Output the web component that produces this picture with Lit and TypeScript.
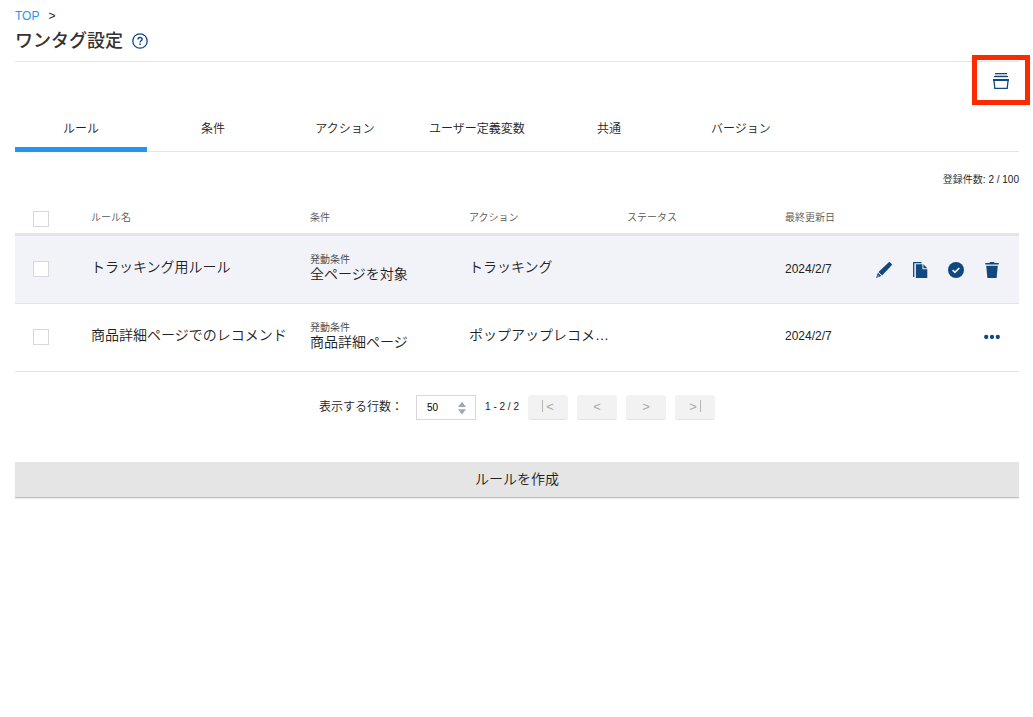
import { LitElement, html, css, svg, nothing } from "lit";
import { customElement, property, state } from "lit/decorators.js";
import { classMap } from "lit/directives/class-map.js";

const icons: Record<string, unknown> = {
  help: svg`<circle cx="8" cy="8" r="7.2" fill="none" stroke="currentColor" stroke-width="1.3"/><path d="M5.900 6.600C5.900 5.200 6.800 4.500 8 4.500s2.100.7 2.100 1.900c0 1.300-2 1.500-2 3" fill="none" stroke="currentColor" stroke-width="1.400"/><rect x="7.300" y="10.500" width="1.500" height="1.500" fill="currentColor"/>`,
  versions: svg`<path d="M2 0h12v1H2z" fill="currentColor"/><path d="M1 3h14v1.200H1z" fill="currentColor"/><path d="M2 1h12v2H2z" fill="currentColor" opacity=".3"/><path fill="currentColor" d="M0 6h16v2H0z"/><path d="M1 8l.8 7.300h12.400L15 8" fill="none" stroke="currentColor" stroke-width="1.300"/>`,
  pencil: svg`<path fill="currentColor" d="M12.800.3q.6-.5 1.200 0l1.700 1.700q.5.6 0 1.200L6.100 13.400 2.500 9.900zM1.900 10.700l3.400 3.200L0 16z"/><path d="M1.900 13.100l1.100 1.100-1.700.6z" fill="#f1f3f8"/>`,
  copy: svg`<path d="M9.500.7H1.700V15" fill="none" stroke="currentColor" stroke-width="1.300"/><path fill="currentColor" d="M3.900 2.200h6.500v5h4.900V16H3.900zM11.400 2.200l3.900 4h-3.900z"/>`,
  check: svg`<circle cx="8" cy="8" r="8" fill="currentColor"/><path d="M4.600 8.200l2.300 2.200 4.400-4.400" fill="none" stroke="#f1f3f8" stroke-width="1.700"/>`,
  trash: svg`<path fill="currentColor" d="M1.300 1.100h4L6.200 0h3.600l.9 1.100h4v1.500H1.300zM2.200 3.700h11.600L12.600 16H3.400z"/>`,
  more: svg`<circle cx="2.200" cy="8" r="2.150" fill="currentColor"/><circle cx="8" cy="8" r="2.150" fill="currentColor"/><circle cx="13.800" cy="8" r="2.150" fill="currentColor"/>`,
};

@customElement("ui-icon")
class UiIcon extends LitElement {
  @property() name = "";
  static styles = css`
    :host { display: block; width: 16px; height: 16px; color: #10487f; }
    svg { display: block; width: 16px; height: 16px; }
  `;
  render() {
    return html`<svg viewBox="0 0 16 16">${icons[this.name]}</svg>`;
  }
}

interface Rule {
  name: string;
  condition: string;
  action: string;
  updated: string;
  active: boolean;
}

@customElement("app-root")
class AppRoot extends LitElement {
  @state() tab = 0;
  tabs = ["ルール", "条件", "アクション", "ユーザー定義変数", "共通", "バージョン"];
  columns = ["ルール名", "条件", "アクション", "ステータス", "最終更新日"];
  rules: Rule[] = [
    { name: "トラッキング用ルール", condition: "全ページを対象", action: "トラッキング", updated: "2024/2/7", active: true },
    { name: "商品詳細ページでのレコメンド", condition: "商品詳細ページ", action: "ポップアップレコメ…", updated: "2024/2/7", active: false },
  ];

  static styles = css`
    :host {
      display: block; box-sizing: border-box; height: 717px; padding: 0 14px 0 15px; overflow: hidden;
      position: relative; background: #fff; color: #222;
      font-family: "Liberation Sans", "Noto Sans CJK JP", sans-serif; font-size: 12px; font-weight: 350;
    }
    * { box-sizing: border-box; }
    .crumbs { display: flex; gap: 9px; height: 30px; line-height: 32px; }
    .crumbs a { color: #2196f3; }
    .title { display: flex; gap: 9px; align-items: center; height: 32px; padding-bottom: 9px; border-bottom: 1px solid #e5e5e5; }
    h1 { margin: 0; font-size: 18px; line-height: 22px; font-weight: 500; color: #333; }
    .tools { display: flex; justify-content: flex-end; height: 43px; padding: 11px 10px 0 0; }
    .mark { position: absolute; left: 972px; top: 55px; width: 58px; height: 50px; border: 5px solid #fd2a00; }
    .tabs { display: flex; height: 47px; border-bottom: 1px solid #e5e5e5; }
    .tab { width: 132px; height: 47px; line-height: 49px; text-align: center; }
    .tab.on { border-bottom: 5px solid #2196f3; }
    .count { height: 51px; line-height: 56px; font-size: 10px; text-align: right; }
    .row { display: grid; grid-template-columns: 76px 219px 159px 158px 158px 1fr; height: 68px; border-bottom: 1px solid #e5e5e5; }
    .row.head { height: 33px; border-bottom: 3px solid #e5e5e5; font-size: 10px; line-height: 30px; color: #555; }
    .row.on { background: #f1f3f8; }
    .box { width: 16px; height: 16px; margin: 25px 0 0 18px; border: 1px solid #d8d8d8; background: #fff; }
    .head .box { margin-top: 8px; }
    .text { font-size: 14px; line-height: 62px; white-space: nowrap; }
    .cond { padding-top: 17px; font-size: 14px; line-height: 16px; }
    .cond small { display: block; font-size: 10px; line-height: 14px; color: #444; margin-bottom: -1px; }
    .last { display: flex; justify-content: space-between; padding-right: 19px; line-height: 65px; }
    .on .last { padding-top: 1px; }
    .acts { display: flex; gap: 20px; padding-top: 25px; }
    .pager { display: flex; justify-content: center; align-items: center; height: 25px; margin-top: 23px; }
    .label { padding-bottom: 4px; }
    .select { display: flex; align-items: center; justify-content: space-between; width: 60px; height: 25px; margin: 0 9px 0 13px; padding: 0 9px 0 10px; border: 1px solid #d8d8d8; font-size: 10px; color: #000; }
    .select svg { width: 8px; height: 14px; }
    .range { font-size: 10px; margin-right: 9px; padding-bottom: 2px; }
    .pg { display: flex; align-items: center; justify-content: center; gap: 3px; width: 40px; height: 25px; margin-right: 9px; padding-bottom: 2px; border-radius: 3px; background: #f2f2f2; border-bottom: 1px solid #e2e2e2; font-size: 13px; color: #aaa; }
    .pg:last-child { margin-right: 0; }
    .bar { width: 1px; height: 12px; background: #b5b5b5; }
    .create { height: 36px; margin-top: 42px; line-height: 35px; background: #e5e5e5; border-bottom: 1px solid #c0c0c0; box-shadow: 0 1px 1px #eee; text-align: center; font-size: 14px; }
  `;

  rowView(r: Rule) {
    return html`<div class=${classMap({ row: true, on: r.active })}>
      <div><div class="box"></div></div>
      <div class="text">${r.name}</div>
      <div class="cond"><small>発動条件</small>${r.condition}</div>
      <div class="text">${r.action}</div>
      <div></div>
      <div class="last"><span>${r.updated}</span>
        <div class="acts">${(r.active ? ["pencil", "copy", "check", "trash"] : ["more"]).map((n) => html`<ui-icon name=${n}></ui-icon>`)}</div>
      </div>
    </div>`;
  }

  render() {
    const bar = html`<span class="bar"></span>`;
    return html`
      <nav class="crumbs"><a>TOP</a><span>&gt;</span></nav>
      <header class="title"><h1>ワンタグ設定</h1><ui-icon name="help"></ui-icon></header>
      <div class="tools"><ui-icon name="versions"></ui-icon></div>
      <div class="mark"></div>
      <div class="tabs">${this.tabs.map((t, i) => html`<div class=${classMap({ tab: true, on: i === this.tab })} @click=${() => (this.tab = i)}>${t}</div>`)}</div>
      <div class="count">登録件数: 2 / 100</div>
      <div class="row head"><div><div class="box"></div></div>${this.columns.map((c) => html`<div>${c}</div>`)}</div>
      ${this.rules.map((r) => this.rowView(r))}
      <div class="pager">
        <span class="label">表示する行数：</span>
        <div class="select"><span>50</span><svg viewBox="0 0 8 14"><path d="M0 6L4 .8 8 6zM0 8.200h8l-4 5.200z" fill="#9aa9b5"/></svg></div>
        <span class="range">1 - 2 / 2</span>
        ${["first", "prev", "next", "last"].map((k, i) => html`<div class="pg">${k === "first" ? bar : nothing}<span>${i < 2 ? "<" : ">"}</span>${k === "last" ? bar : nothing}</div>`)}
      </div>
      <div class="create">ルールを作成</div>
    `;
  }
}
